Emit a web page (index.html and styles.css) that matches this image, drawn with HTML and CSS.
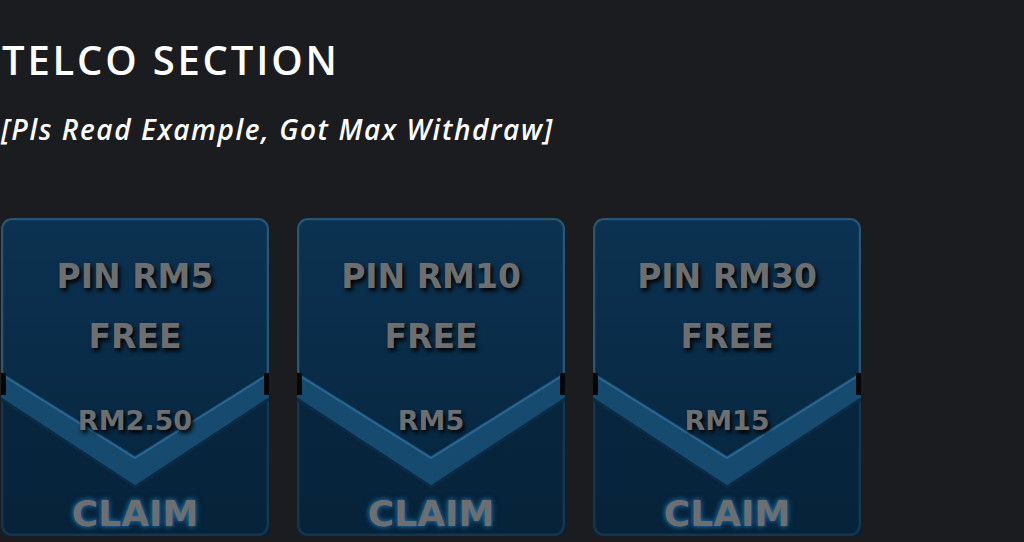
FILE: index.html
```html
<!DOCTYPE html>
<html lang="en">

<head>
    <meta charset="UTF-8">
    <meta name="viewport" content="width=device-width, initial-scale=1.0">
    <title>Telco Section</title>
    <link rel="stylesheet" href="styles.css">
</head>

<body>

    <div class="section">
        <h2 class="title">TELCO SECTION</h2>
        <p class="note">[Pls Read Example, Got Max Withdraw]</p>

        <div class="cards">
            <div class="card">
                <svg class="chevron" viewBox="0 0 268 320" preserveAspectRatio="none">
                    <polygon class="below" points="0,180 134,268 268,180 268,320 0,320"/>
                    <polygon class="band" points="0,154 134,238 268,154 268,180 134,268 0,180"/>
                    <polyline class="edge" points="0,156 134,240 268,156"/>
                    <polyline class="shade" points="0,181 134,269 268,181"/>
                    <rect class="notch" x="0" y="155" width="5" height="22"/>
                    <rect class="notch" x="263" y="155" width="5" height="22"/>
                </svg>
                <div class="pin">PIN RM5</div>
                <div class="free">FREE</div>
                <div class="price">RM2.50</div>
                <div class="claim">CLAIM</div>
            </div>

            <div class="card">
                <svg class="chevron" viewBox="0 0 268 320" preserveAspectRatio="none">
                    <polygon class="below" points="0,180 134,268 268,180 268,320 0,320"/>
                    <polygon class="band" points="0,154 134,238 268,154 268,180 134,268 0,180"/>
                    <polyline class="edge" points="0,156 134,240 268,156"/>
                    <polyline class="shade" points="0,181 134,269 268,181"/>
                    <rect class="notch" x="0" y="155" width="5" height="22"/>
                    <rect class="notch" x="263" y="155" width="5" height="22"/>
                </svg>
                <div class="pin">PIN RM10</div>
                <div class="free">FREE</div>
                <div class="price">RM5</div>
                <div class="claim">CLAIM</div>
            </div>

            <div class="card">
                <svg class="chevron" viewBox="0 0 268 320" preserveAspectRatio="none">
                    <polygon class="below" points="0,180 134,268 268,180 268,320 0,320"/>
                    <polygon class="band" points="0,154 134,238 268,154 268,180 134,268 0,180"/>
                    <polyline class="edge" points="0,156 134,240 268,156"/>
                    <polyline class="shade" points="0,181 134,269 268,181"/>
                    <rect class="notch" x="0" y="155" width="5" height="22"/>
                    <rect class="notch" x="263" y="155" width="5" height="22"/>
                </svg>
                <div class="pin">PIN RM30</div>
                <div class="free">FREE</div>
                <div class="price">RM15</div>
                <div class="claim">CLAIM</div>
            </div>
        </div>
    </div>

</body>

</html>
```

FILE: styles.css
```css
body {
    margin: 0;
    background-color: #1b1c1f;
    color: #fff;
    font-family: "Open Sans", "DejaVu Sans", sans-serif;
    overflow: hidden;
}

.title {
    margin: 33px 0 0 2px;
    font-size: 40px;
    font-weight: 600;
    line-height: 54px;
    letter-spacing: 2.8px;
}

.note {
    margin: 22px 0 0 1px;
    font-size: 28px;
    font-weight: 600;
    font-style: italic;
    line-height: 40px;
    letter-spacing: 1.6px;
}

.cards {
    display: flex;
    gap: 28px;
    margin-top: 69px;
    padding-left: 1px;
}

.card {
    position: relative;
    width: 268px;
    height: 318px;
    box-sizing: border-box;
    border: 2px solid #2a5676;
    border-radius: 11px;
    background: linear-gradient(#0c3251, #082a45 60%, #06243c);
    box-shadow: inset 0 0 0 1px #0f3a5a;
    display: flex;
    flex-direction: column;
    align-items: center;
    color: #6d6e70;
    font-family: "DejaVu Sans", "Open Sans", sans-serif;
    font-weight: 700;
    text-shadow: 2px 3px 4px #000;
}

.chevron {
    position: absolute;
    left: -2px;
    top: -2px;
    width: 268px;
    height: 320px;
}

.chevron .below {
    fill: #062339;
    opacity: 0.6;
}

.chevron .band {
    fill: #164a6f;
}

.chevron .edge {
    fill: none;
    stroke: #2a6690;
    stroke-width: 2;
}

.chevron .shade {
    fill: none;
    stroke: #0a2b44;
    stroke-width: 3;
}

.chevron .notch {
    fill: #050607;
}

.pin,
.free,
.price,
.claim {
    position: relative;
    line-height: 1;
}

.pin {
    margin-top: 40px;
    font-size: 33px;
}

.free {
    margin-top: 27px;
    font-size: 33px;
}

.price {
    margin-top: 54px;
    font-size: 27px;
}

.claim {
    margin-top: 62px;
    font-size: 36px;
    text-shadow: 0 0 4px #1d6ea6, 0 0 7px #17557f;
}
```
